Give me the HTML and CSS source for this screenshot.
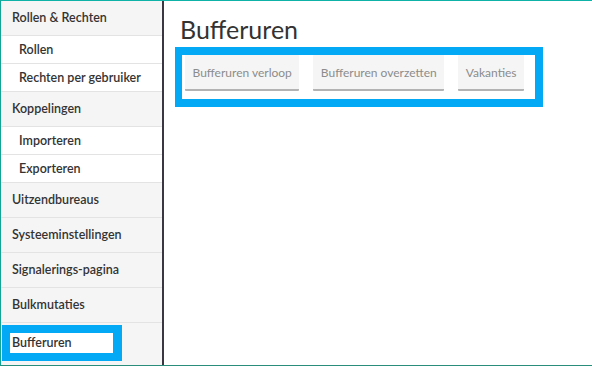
FILE: index.html
```html
<!DOCTYPE html>
<html lang="nl">
  <head>
      <meta charset="UTF-8">
      <meta name="viewport" content="width=device-width, initial-scale=1.0">
      <title>Bufferuren</title>
      <link rel="stylesheet" href="styles.css">
  </head>
  <body>
    <nav class="sidebar">
      <div class="nav-item">Rollen &amp; Rechten</div>
      <div class="nav-sub">Rollen</div>
      <div class="nav-sub">Rechten per gebruiker</div>
      <div class="nav-item">Koppelingen</div>
      <div class="nav-sub">Importeren</div>
      <div class="nav-sub">Exporteren</div>
      <div class="nav-item">Uitzendbureaus</div>
      <div class="nav-item">Systeeminstellingen</div>
      <div class="nav-item">Signalerings-pagina</div>
      <div class="nav-item">Bulkmutaties</div>
      <div class="nav-item nav-active">
        <span class="active-box">Bufferuren</span>
      </div>
    </nav>

    <main class="content">
      <h1>Bufferuren</h1>
      <div class="btn-bar">
        <button>Bufferuren verloop</button>
        <button>Bufferuren overzetten</button>
        <button>Vakanties</button>
      </div>
    </main>
  </body>
</html>
```

FILE: styles.css
```css
html, body {
  height: 100%;
  margin: 0;
  padding: 0;
}

body {
  display: flex;
  font-family: Lato, "Liberation Sans", sans-serif;
  color: #333;
  background-color: #fff;
  box-sizing: border-box;
  border-top: 1px solid #0fb2a6;
  border-left: 1px solid #12a596;
  border-bottom: 1px solid #2a8c7b;
  overflow: hidden;
}

/* linker menu */
.sidebar {
  width: 161px;
  flex-shrink: 0;
  background-color: #f5f5f5;
  border-right: 2px solid #3b3742;
  font-size: 12.5px;
  font-weight: 600;
}

.nav-item {
  height: 34px;
  line-height: 34px;
  padding-left: 11px;
  border-bottom: 1px solid #e3e3e3;
}

.nav-sub {
  height: 27px;
  line-height: 27px;
  padding-left: 18px;
  background-color: #fff;
  border-bottom: 1px solid #e3e3e3;
}

.nav-active {
  padding-left: 1px;
  border-bottom: none;
}

.active-box {
  display: block;
  width: 101px;
  height: 20px;
  line-height: 20px;
  margin-top: 2px;
  padding-left: 2px;
  background-color: #fff;
  border: 8px solid #03a9f4;
  border-right-width: 9px;
}

/* inhoud */
.content {
  flex: 1;
  padding-left: 11px;
}

h1 {
  margin: 14px 0 4px 5px;
  font-size: 25px;
  font-weight: 400;
  line-height: 28px;
  color: #333;
}

.btn-bar {
  display: inline-flex;
  gap: 14px;
  padding: 0 11px 8px 3px;
  border: 8px solid #03a9f4;
  border-left-width: 7px;
}

.btn-bar button {
  height: 36px;
  padding: 0 7.5px;
  font-family: inherit;
  font-size: 12px;
  color: #8c8c8c;
  background-color: #f5f5f5;
  border: none;
  border-bottom: 2px solid #b3b3b3;
  border-radius: 1px;
}
```
